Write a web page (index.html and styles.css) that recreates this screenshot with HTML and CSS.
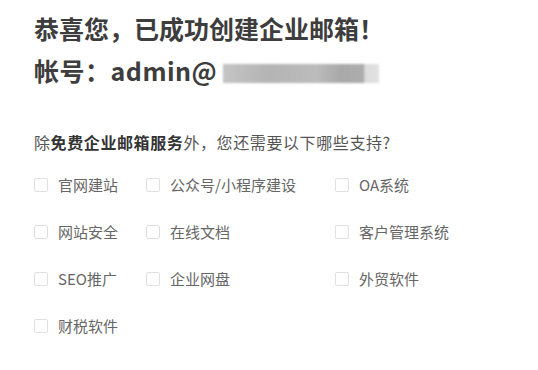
FILE: index.html
```html
<!DOCTYPE html>
<html lang="zh-CN">
<head>
  <meta charset="UTF-8" />
  <meta name="viewport" content="width=device-width, initial-scale=1.0"/>
  <title>企业邮箱</title>
  <link rel="stylesheet" href="styles.css">
</head>
<body>

  <div class="container">
    <h2>恭喜您，已成功创建企业邮箱！</h2>
    <h2 class="account">帐号：admin@<span class="masked"></span></h2>

    <p class="question">除<b>免费企业邮箱服务</b>外，您还需要以下哪些支持?</p>

    <div class="options">
      <label class="option"><span class="box"></span>官网建站</label>
      <label class="option"><span class="box"></span>公众号/小程序建设</label>
      <label class="option"><span class="box"></span>OA系统</label>

      <label class="option"><span class="box"></span>网站安全</label>
      <label class="option"><span class="box"></span>在线文档</label>
      <label class="option"><span class="box"></span>客户管理系统</label>

      <label class="option"><span class="box"></span>SEO推广</label>
      <label class="option"><span class="box"></span>企业网盘</label>
      <label class="option"><span class="box"></span>外贸软件</label>

      <label class="option"><span class="box"></span>财税软件</label>
    </div>
  </div>

</body>
</html>
```

FILE: styles.css
```css
body {
  margin: 0;
  background: #fff;
  font-family: "Noto Sans CJK SC", "Noto Sans", sans-serif;
  color: #333;
}

.container {
  padding: 8px 0 0 34px;
}

h2 {
  margin: 0;
  font-size: 25px;
  line-height: 40px;
  font-weight: bold;
  color: #3d3d3d;
}

.account {
  margin-top: 2px;
  display: flex;
  align-items: center;
  letter-spacing: 0.5px;
}

.masked {
  display: inline-block;
  width: 156px;
  height: 19px;
  margin-left: 6px;
  margin-top: 6px;
  background: linear-gradient(to right, #c4c4c4 0%, #b4b4b4 30%, #bcbcbc 60%, #a9a9a9 75%, #adadad 90%, #dcdcdc 91%, #e2e2e2 100%);
  filter: blur(1px);
}

.question {
  margin: 40px 0 0;
  font-size: 16px;
  line-height: 24px;
  letter-spacing: 0.6px;
  color: #555;
}

.question b {
  color: #333;
}

.options {
  margin-top: 21px;
  display: grid;
  grid-template-columns: 112px 189px auto;
  grid-auto-rows: 47px;
}

.option {
  display: flex;
  align-items: flex-start;
  font-size: 15px;
  line-height: 20px;
  color: #666;
}

.box {
  width: 12px;
  height: 12px;
  margin: 3px 10px 0 0;
  border: 1px solid #e0e0e0;
  border-radius: 2px;
}
```
